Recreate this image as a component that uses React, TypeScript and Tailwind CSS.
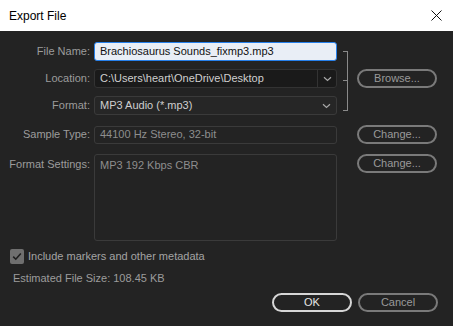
import React from 'react';

const font = { fontFamily: '"Liberation Sans", Arial, sans-serif' };

function Chevron() {
    return (
        <svg width="9" height="6" viewBox="0 0 9 6" className="text-[#a8a8a8]">
            <path d="M1 1.2 L4.5 4.5 L8 1.2" fill="none" stroke="currentColor" strokeWidth="1.2" />
        </svg>
    );
}

function PillButton({ label, strong }: { label: string; strong?: boolean }) {
    return (
        <button
            className={`w-[80px] h-[19px] rounded-full border-2 text-[11px] leading-none flex items-center justify-center ${strong ? 'border-[#d6d6d6] text-[#e6e6e6]' : 'border-[#7a7a7a] text-[#9a9a9a]'
                }`}
        >
            {label}
        </button>
    );
}

function Label({ children }: { children: React.ReactNode }) {
    return <span className="w-[90px] shrink-0 text-right text-[11px] text-[#9c9c9c]">{children}</span>;
}

export default function App() {
    return (
        <div className="w-[453px] h-[326px] bg-[#232323] flex flex-col overflow-hidden" style={font}>
            {/* Title bar */}
            <div className="h-[31px] bg-white flex items-center justify-between pl-[9px] pr-[11px] shrink-0">
                <span className="text-[12px] text-black">Export File</span>
                <svg width="11" height="11" viewBox="0 0 11 11">
                    <path d="M0.5 0.5 L10.5 10.5 M10.5 0.5 L0.5 10.5" stroke="#111" strokeWidth="1" />
                </svg>
            </div>

            {/* Top group */}
            <div className="flex items-center mt-[11px]">
                <div className="flex flex-col gap-[8px]">
                    <div className="flex items-center gap-[4px]">
                        <Label>File Name:</Label>
                        <div className="w-[243px] h-[19px] rounded-[3px] border border-[#2680eb] bg-[#e9eef6] flex items-center px-[5px] text-[11px] text-[#111]">
                            Brachiosaurus Sounds_fixmp3.mp3
                        </div>
                    </div>
                    <div className="flex items-center gap-[4px]">
                        <Label>Location:</Label>
                        <div className="w-[243px] h-[19px] rounded-[3px] border border-[#333] bg-[#1a1a1a] flex items-center text-[11px] text-[#cfcfcf]">
                            <span className="flex-1 px-[5px]">C:\Users\heart\OneDrive\Desktop</span>
                            <span className="w-[19px] h-full border-l border-[#333] flex items-center justify-center">
                                <Chevron />
                            </span>
                        </div>
                    </div>
                    <div className="flex items-center gap-[4px]">
                        <Label>Format:</Label>
                        <div className="w-[243px] h-[19px] rounded-[3px] border border-[#3a3a3a] bg-[#262626] flex items-center text-[11px] text-[#cfcfcf]">
                            <span className="flex-1 px-[5px]">MP3 Audio (*.mp3)</span>
                            <span className="w-[19px] h-full flex items-center justify-center">
                                <Chevron />
                            </span>
                        </div>
                    </div>
                </div>
                {/* bracket */}
                <div className="ml-[6px] mt-[4px] w-[5px] h-[60px] border-y border-r border-[#8a8a8a] flex items-center">
                    <div className="w-[4px] h-px bg-[#8a8a8a]" />
                </div>
                <div className="ml-[9px]">
                    <PillButton label="Browse..." />
                </div>
            </div>

            {/* Sample type */}
            <div className="flex items-center mt-[10px]">
                <div className="flex items-center gap-[4px]">
                    <Label>Sample Type:</Label>
                    <div className="w-[243px] h-[18px] rounded-[3px] border border-[#3a3a3a] flex items-center px-[5px] text-[11px] text-[#8e8e8e]">
                        44100 Hz Stereo, 32-bit
                    </div>
                </div>
                <div className="ml-[20px]">
                    <PillButton label="Change..." />
                </div>
            </div>

            {/* Format settings */}
            <div className="flex items-start mt-[10px]">
                <div className="flex items-start gap-[4px]">
                    <span className="w-[90px] shrink-0 text-right text-[11px] text-[#9c9c9c] pt-[2px]">Format Settings:</span>
                    <div className="w-[243px] h-[87px] rounded-[3px] border border-[#3a3a3a] px-[5px] pt-[2px] text-[11px] text-[#8e8e8e]">
                        MP3 192 Kbps CBR
                    </div>
                </div>
                <div className="ml-[20px]">
                    <PillButton label="Change..." />
                </div>
            </div>

            {/* Checkbox */}
            <div className="flex items-center mt-[7px] pl-[10px] gap-[4px]">
                <div className="w-[14px] h-[15px] rounded-[2px] bg-[#6f6f6f] flex items-center justify-center">
                    <svg width="10" height="9" viewBox="0 0 10 9">
                        <path d="M1.2 4.6 L3.8 7.2 L8.8 1.5" fill="none" stroke="#1e1e1e" strokeWidth="1.6" />
                    </svg>
                </div>
                <span className="text-[11px] text-[#a4a4a4]">Include markers and other metadata</span>
            </div>

            <div className="pl-[13px] mt-[5px] text-[11px] text-[#9c9c9c]">Estimated File Size: 108.45 KB</div>

            {/* Footer buttons */}
            <div className="flex justify-end gap-[6px] pr-[15px] mt-[7px]">
                <PillButton label="OK" strong />
                <PillButton label="Cancel" />
            </div>
        </div>
    );
}
